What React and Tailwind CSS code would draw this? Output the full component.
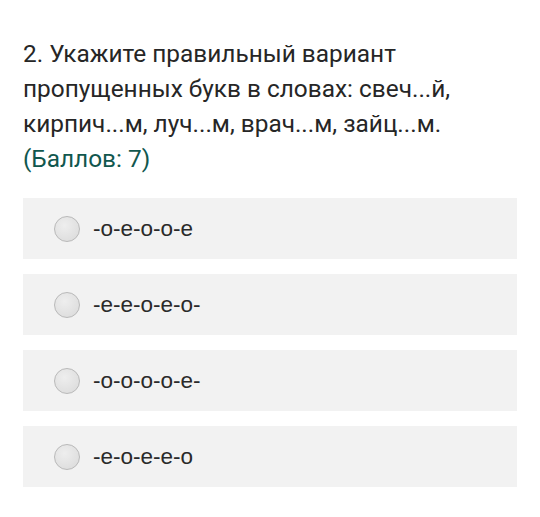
import React from "react";

const options = ["-о-е-о-о-е", "-е-е-о-е-о-", "-о-о-о-о-е-", "-е-о-е-е-о"];

function Radio() {
  return (
    <span className="w-[26px] h-[26px] rounded-full border border-[#b9b9b9] bg-[radial-gradient(circle_at_40%_35%,#eeeeee,#d9d9d9)] shrink-0" />
  );
}

export default function App() {
  return (
    <div className="w-[540px] h-[517px] bg-white pt-[36px] px-[23px]">
      <div
        className="text-[24.4px] leading-[35px] text-[#262626]"
        style={{ fontFamily: "Roboto, sans-serif" }}
      >
        <p className="w-[480px]">
          2. Укажите правильный вариант пропущенных букв в словах: свеч...й,
          кирпич...м, луч...м, врач...м, зайц...м.
        </p>
        <p className="text-[#11574e]">(Баллов: 7)</p>
      </div>

      <div className="mt-[22px] flex flex-col gap-[15px] w-[494px]">
        {options.map((opt) => (
          <label
            key={opt}
            className="h-[61px] bg-[#f2f2f2] flex items-center pl-[31px] gap-[13px]"
          >
            <Radio />
            <span
              className="text-[22.5px] text-[#2a2a2a]"
              style={{ fontFamily: "'Liberation Sans', Arial, sans-serif" }}
            >
              {opt}
            </span>
          </label>
        ))}
      </div>
    </div>
  );
}
